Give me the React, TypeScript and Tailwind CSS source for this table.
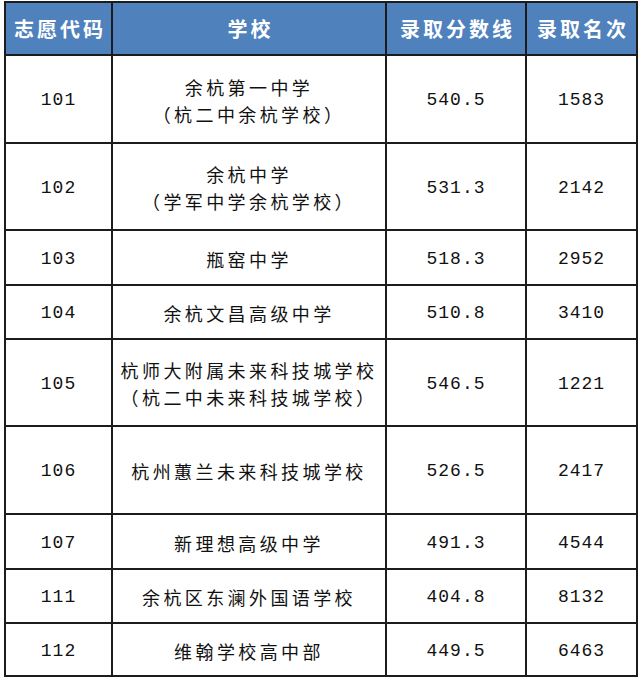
import React from 'react';

interface Row {
  code: string;
  school: string[];
  score: string;
  rank: string;
  h: string;
}

const rows: Row[] = [
  { code: '101', school: ['余杭第一中学', '（杭二中余杭学校）'], score: '540.5', rank: '1583', h: 'h-[88px]' },
  { code: '102', school: ['余杭中学', '（学军中学余杭学校）'], score: '531.3', rank: '2142', h: 'h-[87px]' },
  { code: '103', school: ['瓶窑中学'], score: '518.3', rank: '2952', h: 'h-[55px]' },
  { code: '104', school: ['余杭文昌高级中学'], score: '510.8', rank: '3410', h: 'h-[54px]' },
  { code: '105', school: ['杭师大附属未来科技城学校', '（杭二中未来科技城学校）'], score: '546.5', rank: '1221', h: 'h-[87px]' },
  { code: '106', school: ['杭州蕙兰未来科技城学校'], score: '526.5', rank: '2417', h: 'h-[88px]' },
  { code: '107', school: ['新理想高级中学'], score: '491.3', rank: '4544', h: 'h-[55px]' },
  { code: '111', school: ['余杭区东澜外国语学校'], score: '404.8', rank: '8132', h: 'h-[54px]' },
  { code: '112', school: ['维翰学校高中部'], score: '449.5', rank: '6463', h: 'h-[51px]' },
];

const cjk = 'font-["Noto_Sans_CJK_SC",sans-serif]';
const mono = 'font-["Liberation_Mono","Noto_Sans_CJK_SC",monospace] text-[18px] tracking-[1px]';

export default function App() {
  return (
    <div className="min-h-[678px] bg-white pt-[1px]">
      <div className="ml-[4px] w-[634px] border-2 border-[#1c1c1c] text-[#111]">
        {/* header */}
        <div className={`flex h-[53px] border-b-2 border-[#1c1c1c] bg-[#4f81bd] text-white font-bold text-[20px] tracking-[3px] ${cjk}`}>
          <div className="flex w-[107px] items-center justify-center border-r-2 border-[#1c1c1c] pl-[3px]">志愿代码</div>
          <div className="flex w-[274px] items-center justify-center border-r-2 border-[#1c1c1c] pl-[3px]">学校</div>
          <div className="flex w-[140px] items-center justify-center border-r-2 border-[#1c1c1c] pl-[3px]">录取分数线</div>
          <div className="flex w-[109px] items-center justify-center pl-[3px]">录取名次</div>
        </div>

        {rows.map((r, i) => (
          <div
            key={r.code}
            className={`flex ${r.h} ${i < rows.length - 1 ? 'border-b-2 border-[#1c1c1c]' : ''}`}
          >
            <div className={`flex w-[107px] items-center justify-center border-r-2 border-[#1c1c1c] pt-[3px] ${mono}`}>{r.code}</div>
            <div className={`flex w-[274px] flex-col items-center justify-center border-r-2 border-[#1c1c1c] pt-[3px] text-[18px] tracking-[3.4px] leading-[27px] ${cjk}`}>
              {r.school.map((s) => (
                <span key={s}>{s}</span>
              ))}
            </div>
            <div className={`flex w-[140px] items-center justify-center border-r-2 border-[#1c1c1c] pt-[3px] ${mono}`}>{r.score}</div>
            <div className={`flex w-[109px] items-center justify-center pt-[3px] ${mono}`}>{r.rank}</div>
          </div>
        ))}
      </div>
    </div>
  );
}
